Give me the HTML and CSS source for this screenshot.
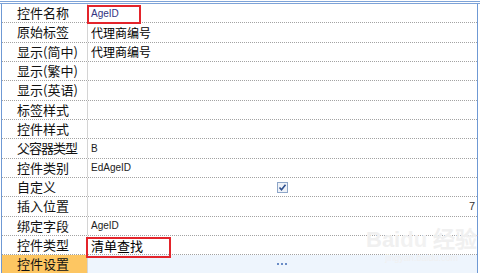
FILE: index.html
```html
<!DOCTYPE html>
<html lang="zh-CN">
<head>
  <meta charset="UTF-8">
  <title>控件属性</title>
  <link rel="stylesheet" href="styles.css">
</head>
<body>
  <div class="sheet">
    <div class="topline"></div>
    <div class="grid">
      <div class="row"><div class="label">控件名称</div><div class="value latin focus">AgeID</div></div>
      <div class="row"><div class="label">原始标签</div><div class="value">代理商编号</div></div>
      <div class="row"><div class="label">显示(简中)</div><div class="value">代理商编号</div></div>
      <div class="row"><div class="label">显示(繁中)</div><div class="value"></div></div>
      <div class="row"><div class="label">显示(英语)</div><div class="value"></div></div>
      <div class="row"><div class="label">标签样式</div><div class="value"></div></div>
      <div class="row"><div class="label">控件样式</div><div class="value"></div></div>
      <div class="row"><div class="label tight">父容器类型</div><div class="value latin">B</div></div>
      <div class="row"><div class="label">控件类别</div><div class="value latin">EdAgeID</div></div>
      <div class="row">
        <div class="label">自定义</div>
        <div class="value center">
          <svg class="check" width="11" height="11" viewBox="0 0 11 11">
            <rect x="0.5" y="0.5" width="10" height="10" fill="#eef2f8" stroke="#8ea6c8"/>
            <path d="M2.5 5.5 L4.5 7.8 L8.5 2.8" fill="none" stroke="#2d4f8e" stroke-width="1.6"/>
          </svg>
        </div>
      </div>
      <div class="row"><div class="label">插入位置</div><div class="value latin right">7</div></div>
      <div class="row"><div class="label">绑定字段</div><div class="value latin">AgeID</div></div>
      <div class="row"><div class="label">控件类型</div><div class="value big">清单查找</div></div>
      <div class="row last">
        <div class="label">控件设置</div>
        <div class="value center">
          <svg width="12" height="3" viewBox="0 0 12 3">
            <rect x="0" y="0" width="2" height="2" fill="#6a8cc6"/>
            <rect x="4" y="0" width="2" height="2" fill="#6a8cc6"/>
            <rect x="8" y="0" width="2" height="2" fill="#6a8cc6"/>
          </svg>
        </div>
      </div>
    </div>

    <div class="mark mark-name"></div>
    <div class="mark mark-type"></div>

    <div class="watermark">
      <span class="wm-brand">Bai<span class="wm-du">du</span> 经验</span>
      <span class="wm-url">jingyan.baidu.com</span>
    </div>
  </div>
</body>
</html>
```

FILE: styles.css
```css
body {
  margin: 0;
  background: #fff;
  font-family: "Noto Sans CJK SC", sans-serif;
  color: #000;
  overflow: hidden;
}
.sheet {
  position: relative;
  height: 273px;
}
.topline {
  margin-top: 1px;
  border-top: 3px double #7ea3d8;
}
.grid {
  width: 477px;
  margin-left: 1px;
  box-sizing: border-box;
  border-left: 1px solid #6f99d4;
  border-right: 1px solid #6f99d4;
}
.row {
  display: flex;
  height: 19.33px;
  box-sizing: border-box;
  border-bottom: 1px dotted #a3a3a3;
}
.label {
  width: 86px;
  box-sizing: border-box;
  padding-left: 15px;
  border-right: 1px solid #d4d4d4;
  font-size: 13px;
  line-height: 18px;
  color: #111;
  white-space: nowrap;
}
.label.tight {
  letter-spacing: -1px;
}
.value {
  flex: 1;
  display: flex;
  align-items: center;
  padding-left: 3px;
  font-size: 12px;
  white-space: nowrap;
}
.latin {
  font-family: "Liberation Sans", Arial, sans-serif;
  font-size: 10px;
  color: #1c1c1c;
}
.focus {
  color: #33337f;
}
.big {
  font-size: 13px;
}
.center {
  justify-content: center;
  padding-left: 0;
}
.right {
  justify-content: flex-end;
  padding-right: 2px;
  font-size: 11px;
  color: #333;
}
.row.last {
  height: 19px;
  border-bottom: none;
}
.row.last .label {
  background: #fdc662;
}
.row.last .value {
  background: #eef5fd;
}
.mark {
  position: absolute;
  border: 2px solid #e3242b;
  box-sizing: border-box;
}
.mark-name {
  left: 87px;
  top: 4px;
  width: 54px;
  height: 19px;
}
.mark-type {
  left: 86px;
  top: 236px;
  width: 85px;
  height: 21px;
}
.watermark {
  position: absolute;
  left: 366px;
  top: 226px;
  display: flex;
  flex-direction: column;
  align-items: center;
  color: #f0f0f0;
  pointer-events: none;
}
.wm-brand {
  font-family: "Liberation Sans", Arial, sans-serif;
  font-size: 22px;
  font-weight: bold;
  line-height: 26px;
}
.wm-du {
  color: #f2f2f2;
}
.wm-url {
  font-family: "Liberation Sans", Arial, sans-serif;
  font-size: 9px;
  line-height: 10px;
}
```
